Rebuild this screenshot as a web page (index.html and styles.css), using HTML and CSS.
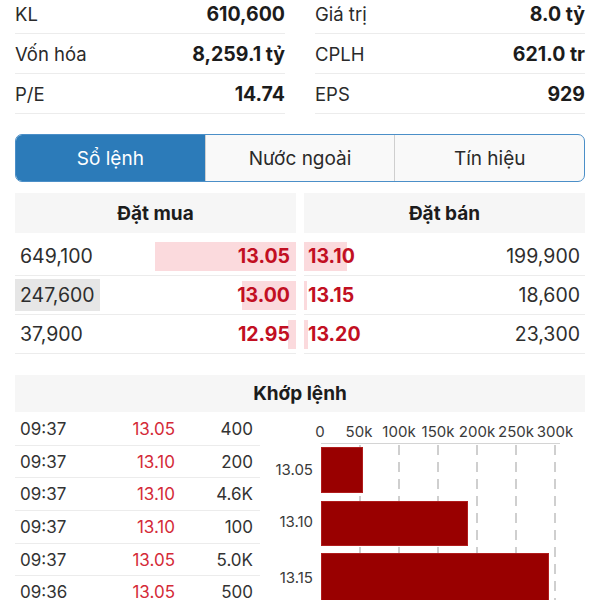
FILE: index.html
```html
<!DOCTYPE html>
<html>
	<head>
		<meta charset="utf-8">
		<title>Sổ lệnh</title>
		<link rel="stylesheet" href="styles.css">
	</head>
	<body>
		<div class="page">

			<div class="stats">
				<div class="stat"><span class="label">KL</span><span class="value">610,600</span></div>
				<div class="stat"><span class="label">Giá trị</span><span class="value">8.0 tỷ</span></div>
				<div class="stat"><span class="label">Vốn hóa</span><span class="value">8,259.1 tỷ</span></div>
				<div class="stat"><span class="label">CPLH</span><span class="value">621.0 tr</span></div>
				<div class="stat"><span class="label">P/E</span><span class="value">14.74</span></div>
				<div class="stat"><span class="label">EPS</span><span class="value">929</span></div>
			</div>

			<div class="tabs">
				<div class="tab active">Sổ lệnh</div>
				<div class="tab">Nước ngoài</div>
				<div class="tab">Tín hiệu</div>
			</div>

			<div class="book">
				<div class="side buy">
					<div class="sideHead">Đặt mua</div>
					<div class="bookRow" style="background-size: 141px 29px"><span class="qty">649,100</span><span class="price">13.05</span></div>
					<div class="bookRow" style="background-size: 54px 29px"><span class="qty flash">247,600</span><span class="price">13.00</span></div>
					<div class="bookRow" style="background-size: 8px 29px"><span class="qty">37,900</span><span class="price">12.95</span></div>
				</div>
				<div class="side sell">
					<div class="sideHead">Đặt bán</div>
					<div class="bookRow" style="background-size: 43px 29px"><span class="price">13.10</span><span class="qty">199,900</span></div>
					<div class="bookRow" style="background-size: 3px 29px"><span class="price">13.15</span><span class="qty">18,600</span></div>
					<div class="bookRow" style="background-size: 4px 29px"><span class="price">13.20</span><span class="qty">23,300</span></div>
				</div>
			</div>

			<div class="match">
				<div class="matchHead">Khớp lệnh</div>
				<div class="matchBody">
					<div class="trades">
						<div class="trade"><span>09:37</span><span class="tPrice">13.05</span><span class="tVol">400</span></div>
						<div class="trade"><span>09:37</span><span class="tPrice">13.10</span><span class="tVol">200</span></div>
						<div class="trade"><span>09:37</span><span class="tPrice">13.10</span><span class="tVol">4.6K</span></div>
						<div class="trade"><span>09:37</span><span class="tPrice">13.10</span><span class="tVol">100</span></div>
						<div class="trade"><span>09:37</span><span class="tPrice">13.05</span><span class="tVol">5.0K</span></div>
						<div class="trade"><span>09:36</span><span class="tPrice">13.05</span><span class="tVol">500</span></div>
					</div>

					<svg class="chart" width="325" height="188" viewBox="0 0 325 188">
						<!-- luoi -->
						<g stroke="#cfcfcf" stroke-width="2" stroke-dasharray="10 7">
							<line x1="100" y1="33" x2="100" y2="188"/>
							<line x1="139" y1="33" x2="139" y2="188"/>
							<line x1="178" y1="33" x2="178" y2="188"/>
							<line x1="217" y1="33" x2="217" y2="188"/>
							<line x1="256" y1="33" x2="256" y2="188"/>
							<line x1="295" y1="33" x2="295" y2="188"/>
						</g>
						<line x1="61" y1="31.5" x2="300" y2="31.5" stroke="#d4d4d4" stroke-width="1"/>

						<g class="tick" text-anchor="middle">
							<text x="60" y="25">0</text>
							<text x="99" y="25">50k</text>
							<text x="139" y="25">100k</text>
							<text x="178" y="25">150k</text>
							<text x="217" y="25">200k</text>
							<text x="256" y="25">250k</text>
							<text x="295" y="25">300k</text>
						</g>

						<g fill="#990000" stroke="#b01c1c" stroke-width="1">
							<rect x="61.5" y="35.5" width="41" height="45"/>
							<rect x="61.5" y="89.5" width="146" height="44"/>
							<rect x="61.5" y="141.5" width="227" height="50"/>
						</g>

						<g class="tick" text-anchor="end">
							<text x="53" y="63">13.05</text>
							<text x="53" y="115">13.10</text>
							<text x="53" y="171">13.15</text>
						</g>
					</svg>
				</div>
			</div>

		</div>
	</body>
</html>
```

FILE: styles.css
```css
   body {
		margin: 0;
		background-color: white;
		font-family: Inter, "Liberation Sans", sans-serif;
		color: #1c1c1c;
   }

   .page {
		width: 570px;
		padding: 0 15px;
		overflow: hidden;
		height: 600px;
   }

   /* thong so */
   .stats {
		display: grid;
		grid-template-columns: 1fr 1fr;
		column-gap: 30px;
		margin-top: -6px;
   }

   .stat {
		height: 39px;
		border-bottom: 1px solid #ececec;
		display: flex;
		justify-content: space-between;
		align-items: center;
		font-size: 18.5px;
   }

   .label {
		color: #2a2a2a;
   }

   .value {
		font-weight: 700;
		font-size: 19.5px;
   }

   /* tabs */
   .tabs {
		margin-top: 20px;
		height: 48px;
		box-sizing: border-box;
		border: 1px solid #4b8fc8;
		border-radius: 7px;
		overflow: hidden;
		display: flex;
		background-color: #f9f9f9;
   }

   .tab {
		flex: 1;
		display: flex;
		align-items: center;
		justify-content: center;
		font-size: 19px;
		color: #2a2a2a;
		border-left: 1px solid #cfcfcf;
   }

   .tab:first-child {
		border-left: none;
   }

   .tab.active {
		background-color: #2c7bb9;
		color: white;
   }

   /* so lenh */
   .book {
		margin-top: 11px;
		display: flex;
		gap: 8px;
   }

   .side {
		flex: 1;
   }

   .sideHead {
		height: 40px;
		background-color: #f6f6f6;
		display: flex;
		align-items: center;
		justify-content: center;
		font-size: 19px;
		font-weight: 700;
		margin-bottom: 4px;
   }

   .bookRow {
		height: 38px;
		border-bottom: 1px solid #ececec;
		display: flex;
		justify-content: space-between;
		align-items: center;
		font-size: 19.5px;
		background-image: linear-gradient(#fbdadd, #fbdadd);
		background-repeat: no-repeat;
   }

   .buy .bookRow {
		background-position: right center;
		padding-right: 6px;
   }

   .sell .bookRow {
		background-position: left center;
		padding: 0 5px 0 4px;
   }

   .buy .qty {
		padding: 0 5px;
		line-height: 32px;
   }

   .qty {
		color: #2e2e2e;
   }

   .qty.flash {
		background-color: #e6e6e6;
   }

   .price {
		color: #c20f22;
		font-weight: 700;
   }

   /* khop lenh */
   .match {
		margin-top: 21px;
   }

   .matchHead {
		height: 37px;
		background-color: #f6f6f6;
		display: flex;
		align-items: center;
		justify-content: center;
		font-size: 19px;
		font-weight: 700;
   }

   .matchBody {
		display: flex;
   }

   .trades {
		width: 245px;
		padding-top: 1px;
   }

   .trade {
		height: 32.7px;
		box-sizing: border-box;
		border-bottom: 1px solid #ececec;
		display: grid;
		grid-template-columns: 95px 60px 78px;
		align-items: center;
		padding: 0 7px 0 5px;
		font-size: 17px;
		color: #333;
   }

   .tPrice {
		color: #d42a38;
		text-align: right;
   }

   .tVol {
		text-align: right;
   }

   .chart {
		display: block;
		flex: none;
   }

   .tick {
		font-family: Inter, "Liberation Sans", sans-serif;
		font-size: 15px;
		fill: #3a3a3a;
   }
```
